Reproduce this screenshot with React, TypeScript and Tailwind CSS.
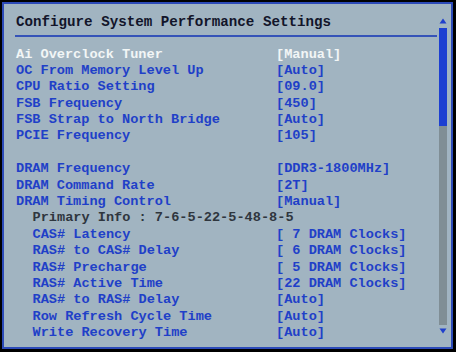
import React from "react"

type Row = {
  label: string
  value?: string
  sub?: boolean
  kind?: "selected" | "info" | "blank"
}

const rows: Row[] = [
  { label: "Ai Overclock Tuner", value: "[Manual]", kind: "selected" },
  { label: "OC From Memory Level Up", value: "[Auto]" },
  { label: "CPU Ratio Setting", value: "[09.0]" },
  { label: "FSB Frequency", value: "[450]" },
  { label: "FSB Strap to North Bridge", value: "[Auto]" },
  { label: "PCIE Frequency", value: "[105]" },
  { label: "", kind: "blank" },
  { label: "DRAM Frequency", value: "[DDR3-1800MHz]" },
  { label: "DRAM Command Rate", value: "[2T]" },
  { label: "DRAM Timing Control", value: "[Manual]" },
  { label: "Primary Info : 7-6-5-22-5-48-8-5", sub: true, kind: "info" },
  { label: "CAS# Latency", value: "[ 7 DRAM Clocks]", sub: true },
  { label: "RAS# to CAS# Delay", value: "[ 6 DRAM Clocks]", sub: true },
  { label: "RAS# Precharge", value: "[ 5 DRAM Clocks]", sub: true },
  { label: "RAS# Active Time", value: "[22 DRAM Clocks]", sub: true },
  { label: "RAS# to RAS# Delay", value: "[Auto]", sub: true },
  { label: "Row Refresh Cycle Time", value: "[Auto]", sub: true },
  { label: "Write Recovery Time", value: "[Auto]", sub: true },
]

function Arrow({ down }: { down?: boolean }) {
  return (
    <svg width="8" height="6" viewBox="0 0 8 6" className="block">
      {down ? (
        <polygon points="0.5,0.5 7.5,0.5 4,5.5" fill="#1f3fcc" />
      ) : (
        <polygon points="4,0.5 7.5,5.5 0.5,5.5" fill="#1f3fcc" />
      )}
    </svg>
  )
}

export default function App() {
  return (
    <div className="w-[456px] h-[352px] bg-black pt-[2px] pl-[2px] pr-[3px] pb-[3px] font-['Liberation_Mono',monospace] font-bold">
      <div className="w-full h-full border-2 border-[#2c4ab8] bg-[#a1b4c1] flex">
        {/* Main panel */}
        <div className="flex-1 flex flex-col pl-[11px] pt-[8px]">
          <div className="pl-[1px] h-[20px] leading-[20px] text-[14.2px] text-[#12152a] whitespace-pre">
            Configure System Performance Settings
          </div>
          <div className="mt-[3px] h-[2px] bg-[#3553b8]" />
          <div className="mt-[9.5px] grid grid-cols-[260px_1fr] pl-[1px] text-[13.6px] leading-[16.4px]">
            {rows.map((row, i) => {
              if (row.kind === "blank") {
                return <div key={i} className="col-span-2 h-[16.4px]" />
              }
              const color =
                row.kind === "selected"
                  ? "text-[#f2f6f6]"
                  : row.kind === "info"
                  ? "text-[#2f363e]"
                  : "text-[#1f40c8]"
              return (
                <React.Fragment key={i}>
                  <div
                    className={`${row.kind === "info" ? "col-span-2" : ""} ${
                      row.sub ? "pl-[16.5px]" : ""
                    } ${color} whitespace-pre h-[16.4px]`}
                  >
                    {row.label}
                  </div>
                  {row.kind !== "info" && (
                    <div className={`${color} whitespace-pre h-[16.4px]`}>{row.value}</div>
                  )}
                </React.Fragment>
              )
            })}
          </div>
        </div>

        {/* Scrollbar */}
        <div className="w-[8px] ml-[2px] mr-[4px] pt-[14px] flex flex-col items-center">
          <Arrow />
          <div className="mt-[4px] w-[8px] h-[98px] bg-[#1c3fd2]" />
          <div className="w-[8px] h-[199px] bg-[#808e95]" />
          <div className="mt-[3px]">
            <Arrow down />
          </div>
        </div>
      </div>
    </div>
  )
}
